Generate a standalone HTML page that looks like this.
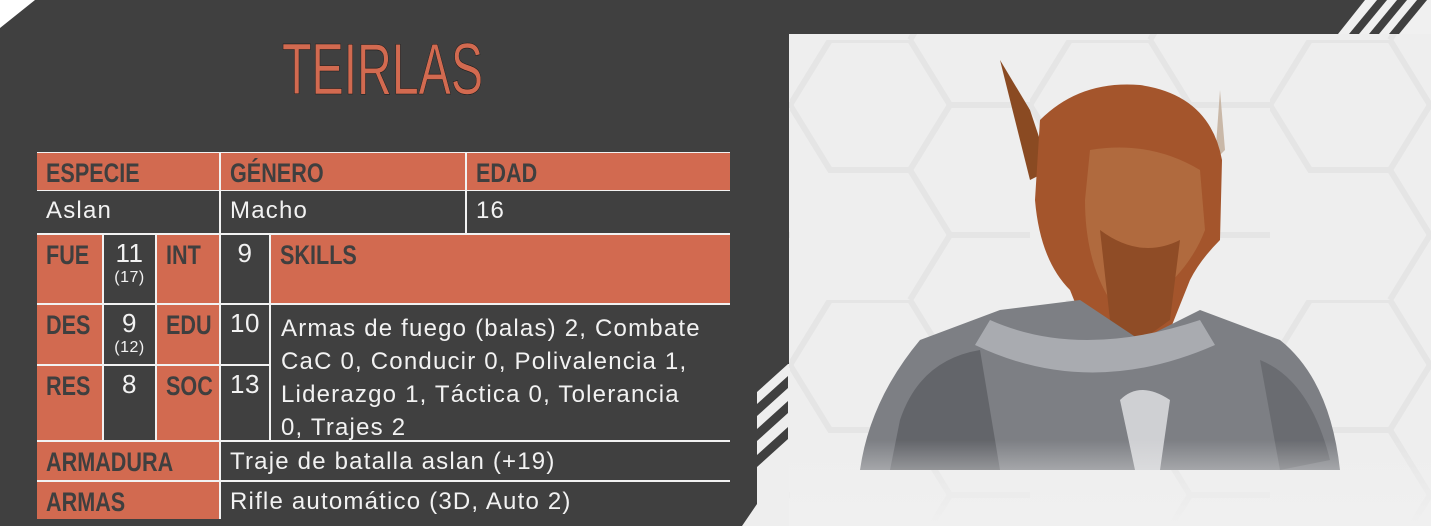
<!DOCTYPE html>
<html><head><meta charset="utf-8"><style>
*{margin:0;padding:0;box-sizing:border-box}
body{width:1431px;height:526px;background:#404040;position:relative;overflow:hidden;font-family:"Liberation Sans",sans-serif}
.c{position:absolute;color:#f2f2f2;font-size:24px;line-height:1;letter-spacing:1.2px;white-space:nowrap}
.o{background:#d26a50}
.d{background:#404040}
.h{color:#3f3f3f;padding:7px 0 0 9px;letter-spacing:0}
.h span{display:inline-block;font-weight:bold;font-size:27px;transform:scaleX(0.8);transform-origin:left top}
.v{padding:8px 0 0 9px}
.n{text-align:center;padding-top:5px;font-size:26px;letter-spacing:0.5px}
.n small{display:block;font-size:16px;margin-top:4px}
</style></head><body>
<svg width="1431" height="526" style="position:absolute;left:0;top:0">
<defs>
<linearGradient id="fade" x1="0" y1="0" x2="0" y2="1"><stop offset="0" stop-color="#f0f0f0" stop-opacity="0"/><stop offset="1" stop-color="#f0f0f0"/></linearGradient>
<pattern id="hex" width="240" height="260" patternUnits="userSpaceOnUse" x="790" y="40">
<path d="M40 0 H120 L160 65 L120 130 H40 L0 65 Z M160 65 H240 M120 130 L160 195 L120 260 M160 195 H240" fill="none" stroke="#e5e5e5" stroke-width="6"/>
</pattern>
</defs>
<polygon points="0,0 35,0 0,28" fill="#fff"/>
<polygon points="1338,34 1365,0 1431,0 1431,34" fill="#f0f0f0"/>
<polygon points="1349,34 1359,34 1387,0 1377,0" fill="#404040"/>
<polygon points="1369,34 1379,34 1407,0 1397,0" fill="#404040"/>
<polygon points="1389,34 1399,34 1427,0 1417,0" fill="#404040"/>
<polygon points="789,34 1431,34 1431,526 742,526 757,504 757,392 788,364 789,364" fill="#eeeeee"/>
<rect x="789" y="34" width="642" height="492" fill="url(#hex)"/>
<polygon points="757,404 788,376 788,388 757,416" fill="#404040"/>
<polygon points="757,429 788,401 788,413 757,441" fill="#404040"/>
<polygon points="757,455 788,427 788,439 757,467" fill="#404040"/>
<path d="M1000 60 L1030 110 L1050 170 L1030 180 Z" fill="#8a4a22"/>
<path d="M1220 90 L1225 150 L1215 160 Z" fill="#c9b8a8"/>
<path d="M1040 120 Q1080 80 1140 85 Q1210 95 1222 160 L1220 240 Q1200 260 1190 280 L1170 330 L1130 360 L1090 340 L1070 290 Q1040 260 1035 200 Z" fill="#a4552c"/>
<path d="M1090 150 Q1150 140 1200 170 L1205 230 Q1190 270 1150 300 L1110 300 Q1085 260 1085 200 Z" fill="#b06a3e"/>
<path d="M1100 230 Q1140 260 1180 240 L1170 320 L1135 345 L1110 320 Z" fill="#8f4c26"/>
<path d="M860 470 Q870 400 920 340 L1000 310 L1080 300 L1140 340 L1200 310 L1280 340 Q1330 380 1340 470 Z" fill="#7d7f84"/>
<path d="M990 320 Q1080 360 1200 320 L1215 345 Q1090 400 975 345 Z" fill="#a9abb0"/>
<path d="M1120 400 Q1140 380 1170 400 L1160 470 L1135 470 Z" fill="#cfd0d3"/>
<path d="M900 420 Q920 360 980 350 L1000 470 L890 470 Z" fill="#63656a"/>
<path d="M1260 360 Q1310 380 1330 460 L1280 470 Z" fill="#6a6c71"/>
<rect x="789" y="440" width="642" height="86" fill="url(#fade)"/>
<text x="282" y="94" textLength="201" lengthAdjust="spacingAndGlyphs" font-family="Liberation Sans, sans-serif" font-size="72" fill="#d26a50" stroke="#1a1a1a" stroke-width="0.6">TEIRLAS</text>
</svg>
<div style="position:absolute;left:37px;top:152px;width:693px;height:367px;background:#f2f2f2"></div>
<div class="c o h" style="left:37px;top:153px;width:182px;height:37px"><span>ESPECIE</span></div>
<div class="c o h" style="left:221px;top:153px;width:244px;height:37px"><span>GÉNERO</span></div>
<div class="c o h" style="left:467px;top:153px;width:263px;height:37px"><span>EDAD</span></div>
<div class="c d v" style="left:37px;top:191px;width:182px;height:42px">Aslan</div>
<div class="c d v" style="left:221px;top:191px;width:244px;height:42px">Macho</div>
<div class="c d v" style="left:467px;top:191px;width:263px;height:42px">16</div>

<div class="c o h" style="left:37px;top:235px;width:65px;height:68px"><span>FUE</span></div>
<div class="c d n" style="left:104px;top:235px;width:51px;height:68px">11<small>(17)</small></div>
<div class="c o h" style="left:157px;top:235px;width:62px;height:68px"><span>INT</span></div>
<div class="c d n" style="left:221px;top:235px;width:48px;height:68px">9</div>
<div class="c o h" style="left:271px;top:235px;width:459px;height:68px"><span>SKILLS</span></div>

<div class="c o h" style="left:37px;top:305px;width:65px;height:59px"><span>DES</span></div>
<div class="c d n" style="left:104px;top:305px;width:51px;height:59px">9<small>(12)</small></div>
<div class="c o h" style="left:157px;top:305px;width:62px;height:59px"><span>EDU</span></div>
<div class="c d n" style="left:221px;top:305px;width:48px;height:59px">10</div>

<div class="c o h" style="left:37px;top:366px;width:65px;height:74px"><span>RES</span></div>
<div class="c d n" style="left:104px;top:366px;width:51px;height:74px">8</div>
<div class="c o h" style="left:157px;top:366px;width:62px;height:74px"><span>SOC</span></div>
<div class="c d n" style="left:221px;top:366px;width:48px;height:74px">13</div>

<div class="c d" style="left:271px;top:305px;width:459px;height:135px;padding:7px 0 0 10px;line-height:33px">Armas de fuego (balas) 2, Combate<br>CaC 0, Conducir 0, Polivalencia 1,<br>Liderazgo 1, Táctica 0, Tolerancia<br>0, Trajes 2</div>

<div class="c o h" style="left:37px;top:442px;width:182px;height:38px"><span>ARMADURA</span></div>
<div class="c d v" style="left:221px;top:442px;width:509px;height:38px">Traje de batalla aslan (+19)</div>
<div class="c o h" style="left:37px;top:482px;width:182px;height:37px"><span>ARMAS</span></div>
<div class="c d v" style="left:221px;top:482px;width:509px;height:37px">Rifle automático (3D, Auto 2)</div>
<div style="position:absolute;left:730px;top:152px;width:2px;height:368px;background:#404040"></div>
</body></html>
